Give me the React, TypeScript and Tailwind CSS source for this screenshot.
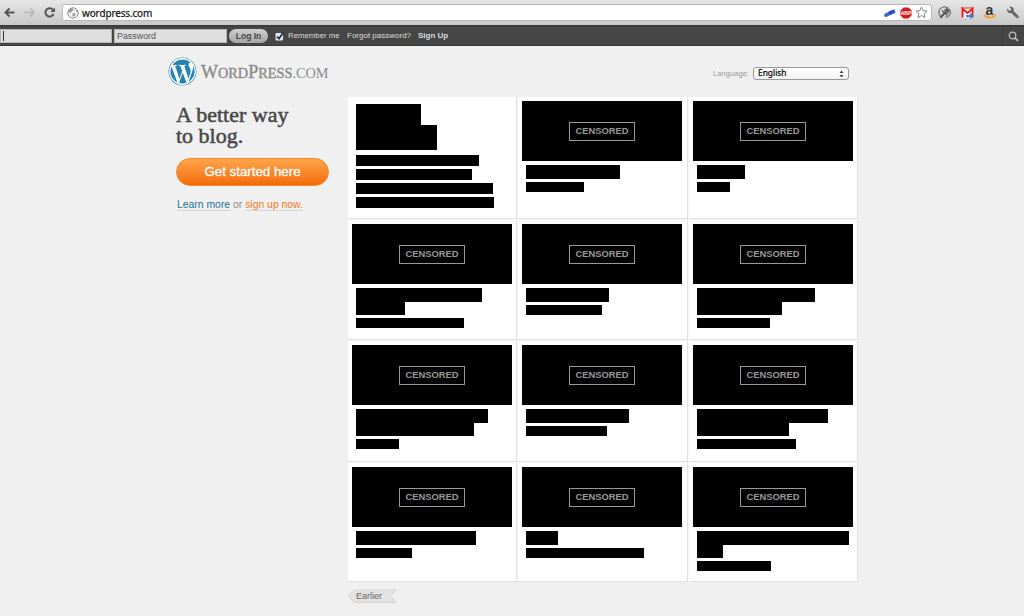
import { FaWordpress, FaWrench } from 'react-icons/fa';

interface Post {
  title: string[];
  meta: string;
}

const posts: Post[] = [
  { title: ['w-[94px]'], meta: 'w-[58px]' },
  { title: ['w-[48px]'], meta: 'w-[33px]' },
  { title: ['w-[126px]', 'w-[49px]'], meta: 'w-[108px]' },
  { title: ['w-[83px]'], meta: 'w-[76px]' },
  { title: ['w-[118px]', 'w-[85px]'], meta: 'w-[73px]' },
  { title: ['w-[132px]', 'w-[118px]'], meta: 'w-[43px]' },
  { title: ['w-[103px]'], meta: 'w-[81px]' },
  { title: ['w-[131px]', 'w-[92px]'], meta: 'w-[99px]' },
  { title: ['w-[120px]'], meta: 'w-[56px]' },
  { title: ['w-[32px]'], meta: 'w-[118px]' },
  { title: ['w-[152px]', 'w-[26px]'], meta: 'w-[74px]' },
];

const cell = 'bg-white border-r border-b border-[#e2e2e2]';

const PostCard = ({ post }: { post: Post }) => (
  <div className={`${cell} pt-1 pl-1`}>
    <div className="w-[160px] h-[60px] bg-black flex items-center justify-center">
      <span className="w-[66px] h-[19px] border border-[#999] flex items-center justify-center text-[9.4px] leading-none font-bold text-[#999]">
        CENSORED
      </span>
    </div>
    <div className="pt-1 pl-1">
      {post.title.map((w, i) => (
        <div key={i} className={`${w} ${i ? 'h-[13px]' : 'h-[14px]'} bg-black`} />
      ))}
      <div className={`${post.meta} h-[10px] mt-[3px] bg-black`} />
    </div>
  </div>
);

const FeatureCard = () => (
  <div className={`${cell} pt-[7px] pl-2`}>
    <div className="w-[65px] h-[21px] bg-black" />
    <div className="w-[81px] h-[25px] bg-black" />
    <div className="mt-[5px] flex flex-col gap-[3px]">
      <div className="w-[123px] h-[11px] bg-black" />
      <div className="w-[116px] h-[11px] bg-black" />
      <div className="w-[137px] h-[11px] bg-black" />
      <div className="w-[138px] h-[11px] bg-black" />
    </div>
  </div>
);

const GlobeIcon = () => (
  <svg width="12" height="12" viewBox="0 0 12 12">
    <circle cx="6" cy="6" r="5.2" fill="#f4f4f4" stroke="#8a8a8a" />
    <path d="M2 2.5 L5.5 1.2 L6.5 3 L4.5 4.5 L3.5 6 L1.2 5Z M5.5 6 L8 6.5 L8.5 8 L6.5 10 L5.5 8.5Z M8.5 2.5 L10.3 3.8 L10.6 5.5 L9.2 4.8Z" fill="#9a9a9a" />
  </svg>
);

const BrowserBar = () => (
  <div className="h-[25px] flex items-center bg-linear-to-b from-[#e6e6e6] to-[#c8c8c8]">
    <svg width="62" height="25" viewBox="0 0 62 25" fill="none">
      <path d="M14.5 12.5H6 M9.5 8.5L5.5 12.5L9.5 16.5" stroke="#555" strokeWidth="2" />
      <path d="M24.5 12.5H33 M30 8.5L34 12.5L30 16.5" stroke="#bcbcbc" strokeWidth="2" />
      <path d="M53 9.8A4.2 4.2 0 1 0 53.5 14" stroke="#555" strokeWidth="2" />
      <path d="M55 7.5V12H50.5Z" fill="#555" />
    </svg>
    <div className="w-[870px] h-[17px] bg-white border border-[#b8b8b8] rounded-[3px] flex items-center pl-1">
      <GlobeIcon />
      <span className="ml-[3px] font-['Noto_Sans','Open_Sans',sans-serif] text-[10px] tracking-[-0.15px] leading-none text-[#111] [-webkit-text-stroke:0.2px_#111]">wordpress.com</span>
      <div className="ml-auto flex items-center gap-[3px] pr-[3px]">
        <svg width="13" height="10" viewBox="0 0 13 10">
          <path d="M2 7.2L6 5.2" stroke="#3d63c4" strokeWidth="3.6" strokeLinecap="round" />
          <path d="M6 5L10.8 3" stroke="#2450c8" strokeWidth="3.8" />
          <path d="M5.2 3.4L7 7" stroke="#173a94" strokeWidth="1" />
        </svg>
        <svg width="12" height="12" viewBox="0 0 12 12">
          <path d="M3.6 .4H8.4L11.6 3.6V8.4L8.4 11.6H3.6L.4 8.4V3.6Z" fill="#cf1a1e" />
          <text x="6" y="7.9" textAnchor="middle" className="text-[5px] font-bold" fill="#fff">ABP</text>
        </svg>
        <svg width="13" height="13" viewBox="0 0 13 13">
          <path d="M6.5 1L8.1 4.7L12.1 5L9.1 7.6L10 11.6L6.5 9.5L3 11.6L3.9 7.6L.9 5L4.9 4.7Z" fill="#fff" stroke="#858585" />
        </svg>
      </div>
    </div>
    <svg width="92" height="25" viewBox="0 0 92 25" fill="none">
      <path d="M8.5 16.2A5 5 0 0 1 16.5 8.5M18.2 10.5A5 5 0 0 1 13.5 17.2" stroke="#777" strokeWidth="1.3" />
      <path d="M8.3 17.8L13 12.8" stroke="#555" strokeWidth="2" />
      <path d="M12 10L14.5 8L18.5 9.5L16 14L13 13Z" fill="#666" />
      <path d="M10 10.5L15.5 15.5" stroke="#555" strokeWidth="1.2" />
      <rect x="29.5" y="7.5" width="12" height="10" fill="#fff" />
      <path d="M30.5 17.5V8.7L35.5 13L40.5 8.7V17.5" stroke="#e0211d" strokeWidth="2" />
      <path d="M29.5 8H41.5" stroke="#e0211d" />
      <path d="M34 15H38V13L42 16L38 19V17H34Z" fill="#3c7fd8" />
      <text x="57.4" y="14.5" textAnchor="middle" className="text-[14px] font-bold" fill="#333">a</text>
      <path d="M52 15Q57 20 63 16" stroke="#f0a02c" strokeWidth="2" />
      <path d="M60.5 14.3L64 14L63 17.3Z" fill="#f0a02c" />
      <g transform="translate(90 6.5) scale(-1 1)">
        <FaWrench x="3" y="0" size={12} color="#626262" />
      </g>
    </svg>
  </div>
);

const LoginBar = () => (
  <div className="h-[21px] flex items-center bg-[#464646] border-t-2 border-b border-t-[#3c3c3c] border-b-[#383838] text-[8px] text-[#ddd]">
    <div className="w-[112px] h-[14px] bg-[#dedede] border border-[#b5b5b5] flex items-center pl-[2px]">
      <span className="w-px h-[10px] bg-[#333]" />
    </div>
    <div className="ml-[2px] w-[113px] h-[14px] bg-[#dedede] border border-[#b5b5b5] flex items-center pl-[2px] text-[8.9px] leading-none text-[#555]">
      Password
    </div>
    <button className="ml-[2px] w-[39px] h-[14px] rounded-full bg-linear-to-b from-[#cfcfcf] to-[#a5a5a5] text-[8.5px] leading-none font-bold text-[#464646]">
      Log In
    </button>
    <svg className="ml-[7px]" width="9" height="9" viewBox="0 0 9 9">
      <rect x=".5" y="1" width="7.5" height="7.5" rx="1" fill="#dce7f2" />
      <path d="M2 4.5L4 6.8L8 .8" fill="none" stroke="#1b2638" strokeWidth="1.6" />
    </svg>
    <span className="ml-1 w-[59px] whitespace-nowrap text-[7.8px]">Remember me</span>
    <span className="w-[71px] whitespace-nowrap text-[8px]">Forgot password?</span>
    <span className="font-bold whitespace-nowrap text-[8px]">Sign Up</span>
    <div className="ml-auto w-[22px] h-full border-l border-[#3a3a3a] flex items-center justify-center">
      <svg width="11" height="11" viewBox="0 0 11 11" fill="none" stroke="#c4c4c4">
        <circle cx="4.5" cy="4.5" r="3.3" strokeWidth="1.2" />
        <path d="M7 7L10 10" strokeWidth="1.7" />
      </svg>
    </div>
  </div>
);

const Header = () => (
  <header className="h-[51px] flex items-start pl-[168px] pr-[175px]">
    <div className="mt-[11px] flex items-center">
      <span className="w-[29px] h-[29px] rounded-full bg-white">
        <FaWordpress size={29} color="#2583ad" />
      </span>
      <span className="ml-1 whitespace-nowrap font-['Liberation_Serif',serif] text-[#8b8b8b] leading-none [-webkit-text-stroke:0.4px_#8b8b8b]">
        <span className="text-[18px]">W</span>
        <span className="text-[14.3px]">ORD</span>
        <span className="text-[18px]">P</span>
        <span className="text-[14.3px]">RESS</span>
        <span className="text-[14.3px] [-webkit-text-stroke:0px]">.COM</span>
      </span>
    </div>
    <div className="ml-auto mt-[21px] flex items-center">
      <span className="mr-1 text-[7.6px] leading-none text-[#999]">Language:</span>
      <div className="w-[96px] h-[13px] bg-linear-to-b from-white to-[#f2f2f2] border border-[#999] rounded-[3px] flex items-center justify-between pl-1 pr-1">
        <span className="font-['Noto_Sans','Open_Sans',sans-serif] text-[8.4px] leading-none text-black [-webkit-text-stroke:0.2px_black]">English</span>
        <svg width="5" height="8" viewBox="0 0 5 8" fill="#444">
          <path d="M2.5 .5L4.5 3H.5Z M2.5 7.5L.5 5H4.5Z" />
        </svg>
      </div>
    </div>
  </header>
);

const Intro = () => (
  <section className="w-[180px] pl-2">
    <h1 className="mt-[7px] font-['Liberation_Serif',serif] text-[22px] leading-[21px] text-[#464646] [-webkit-text-stroke:0.5px_#464646]">
      A better way
      <br />
      to blog.
    </h1>
    <button className="mt-[12px] block w-[153px] h-[28px] rounded-full border border-[#f08a30] bg-linear-to-b from-[#ffa548] to-[#f36c00] text-[13.3px] leading-none text-white [-webkit-text-stroke:0.3px_white]">
      Get started here
    </button>
    <p className="mt-[13px] pl-px text-[10.4px] leading-[12px] text-[#888] whitespace-nowrap">
      <a className="border-b border-[#d5d5d5] text-[#21759b]">Learn more</a> or{' '}
      <a className="border-b border-[#d5d5d5] text-[#f47a1c]">sign up now.</a>
    </p>
  </section>
);

export default function App() {
  return (
    <div className="w-[1024px] h-[616px] overflow-hidden bg-[#f0f0f0] font-['Liberation_Sans',Arial,sans-serif]">
      <BrowserBar />
      <LoginBar />
      <Header />
      <main className="flex items-start pl-[168px]">
        <Intro />
        <section>
          <div className="w-[510px] grid grid-cols-[169px_170px_169px] grid-rows-[122px_120px_121px_119px] gap-px bg-[#f5f5f5]">
            <FeatureCard />
            {posts.map((post, i) => (
              <PostCard key={i} post={post} />
            ))}
          </div>
          <div className="relative mt-[7px] w-[49px] h-[14px]">
            <svg className="absolute inset-0" width="49" height="14" viewBox="0 0 49 14">
              <path d="M0 7L6 1H49L43 7.5L49 14H6Z" fill="#d2d2d2" />
              <path d="M0 6.5L6 0H49L43 6.5L49 12.8H6Z" fill="#e3e3e3" />
            </svg>
            <span className="relative block pl-2 text-[9px] leading-[14px] text-[#666]">Earlier</span>
          </div>
        </section>
      </main>
    </div>
  );
}
